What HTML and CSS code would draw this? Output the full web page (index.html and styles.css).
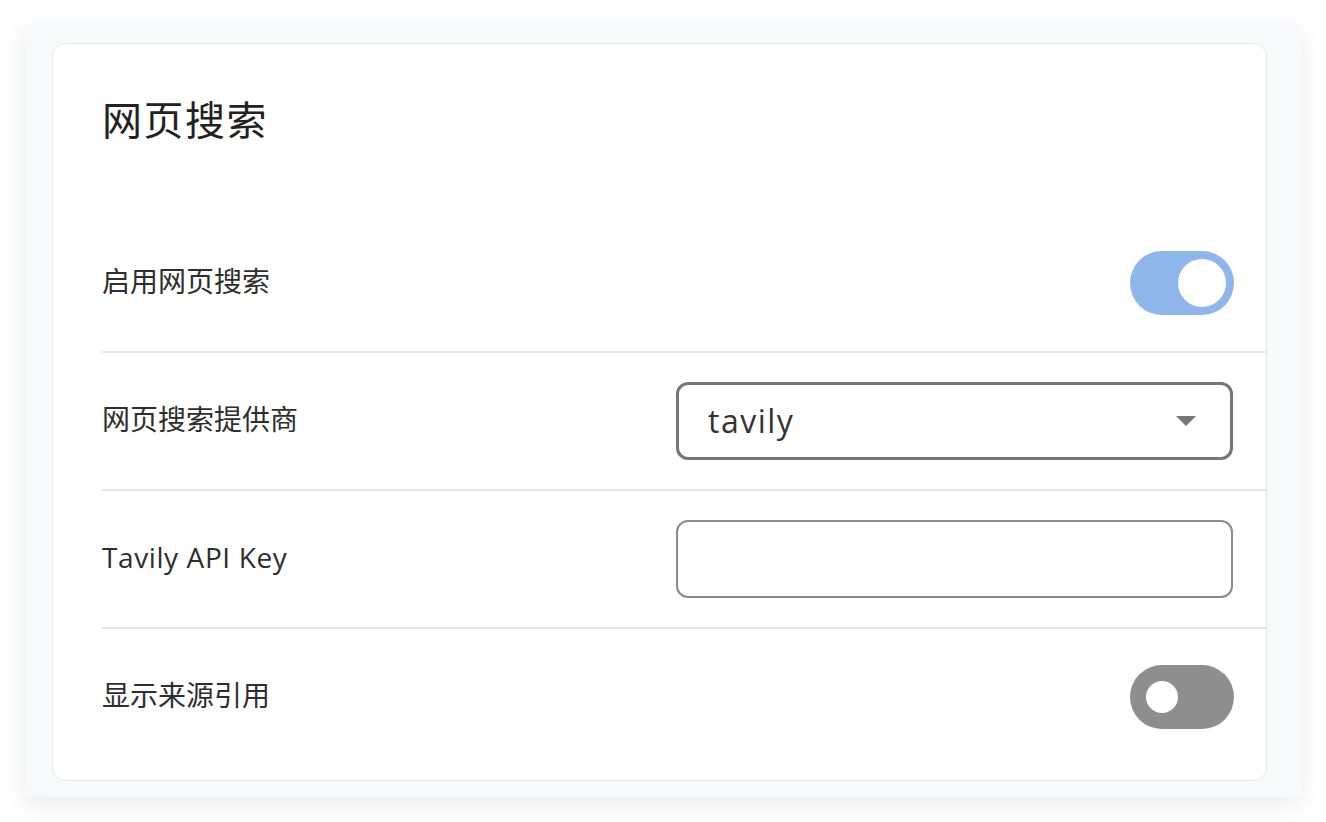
FILE: index.html
```html
<!DOCTYPE html>
<html lang="zh-CN">
<head>
<meta charset="utf-8">
<title>网页搜索</title>
<link rel="stylesheet" href="styles.css">
</head>
<body>
<div class="shell">
  <section class="card">
    <h1 class="title">网页搜索</h1>
    <div class="row">
      <span class="label">启用网页搜索</span>
      <span class="switch switch-on"><span class="knob"></span></span>
    </div>
    <div class="row">
      <span class="label">网页搜索提供商</span>
      <div class="select">
        <span class="select-value">tavily</span>
        <span class="caret"></span>
      </div>
    </div>
    <div class="row">
      <span class="label latin">Tavily API Key</span>
      <input class="input" type="text" aria-label="Tavily API Key">
    </div>
    <div class="row row-last">
      <span class="label">显示来源引用</span>
      <span class="switch switch-off"><span class="knob"></span></span>
    </div>
  </section>
</div>
</body>
</html>
```

FILE: styles.css
```css
* { box-sizing: border-box; }

html, body {
  margin: 0;
  padding: 0;
  background: #ffffff;
}

body {
  font-family: "Open Sans", "Noto Sans CJK SC", sans-serif;
  color: #2b2b2b;
  width: 1326px;
  height: 822px;
  overflow: hidden;
}

.shell {
  margin: 25px 25px 0 25px;
  width: 1276px;
  height: 772px;
  background: #f8f9fa;
  padding: 18px 34px 16px 27px;
  box-shadow: 0 6px 22px rgba(0, 0, 0, 0.09);
}

.card {
  background: #ffffff;
  border: 1px solid #e7e8ea;
  border-radius: 13px;
  height: 738px;
  padding: 52px 0 15px 49px;
}

.title {
  margin: 0 0 71px 0;
  font-size: 40px;
  line-height: 48px;
  font-weight: 400;
  letter-spacing: 1.5px;
  color: #222222;
}

.row {
  display: flex;
  align-items: center;
  height: 138px;
  padding-right: 32px;
  border-bottom: 2px solid #e6e6e6;
}

.row-last {
  border-bottom: none;
  height: 136px;
}

.label {
  flex: 1;
  font-size: 28px;
  line-height: 36px;
  padding-bottom: 4px;
  color: #2e2e2e;
}

.latin {
  letter-spacing: 0.6px;
}

.switch {
  position: relative;
  display: block;
  width: 104px;
  height: 64px;
  border-radius: 32px;
}

.switch-on { background: #8eb6ea; }
.switch-off { background: #8e8e8e; }

.knob {
  position: absolute;
  background: #ffffff;
  border-radius: 50%;
}

.switch-on .knob {
  width: 48px;
  height: 48px;
  top: 8px;
  right: 8px;
}

.switch-off .knob {
  width: 32px;
  height: 32px;
  top: 16px;
  left: 16px;
}

.select {
  width: 557px;
  height: 78px;
  margin-right: 1px;
  border: 3px solid #777777;
  border-radius: 12px;
  display: flex;
  align-items: center;
  padding: 0 34px 0 29px;
}

.select-value {
  flex: 1;
  font-size: 32px;
  color: #333333;
  letter-spacing: 1.5px;
  padding-bottom: 2px;
}

.caret {
  width: 0;
  height: 0;
  border-left: 10px solid transparent;
  border-right: 10px solid transparent;
  border-top: 10px solid #777777;
}

.input {
  width: 557px;
  height: 78px;
  margin-right: 1px;
  border: 2px solid #8a8a8a;
  border-radius: 12px;
  background: #ffffff;
  outline: none;
  padding: 0 29px;
  font: inherit;
  font-size: 32px;
}
```
